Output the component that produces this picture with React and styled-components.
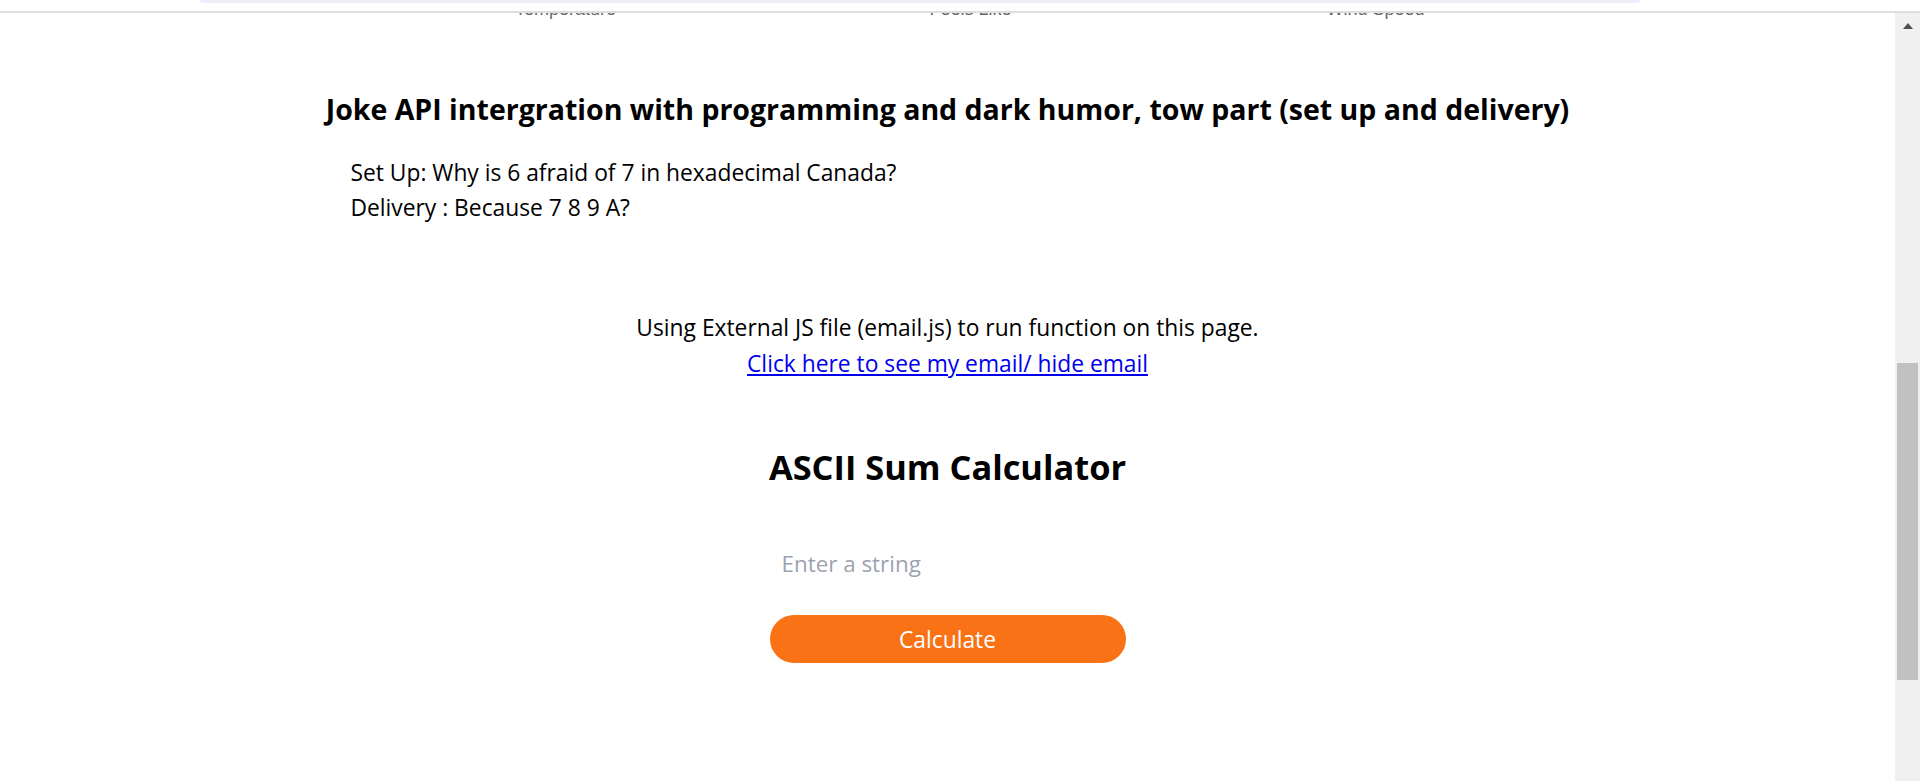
import React from "react";
import styled, { createGlobalStyle } from "styled-components";

const GlobalStyle = createGlobalStyle`
  html, body {
    margin: 0;
    padding: 0;
    overflow: hidden;
    background: #ffffff;
  }
  body {
    font-family: "Open Sans", "Noto Sans", Lato, sans-serif;
    color: #000000;
  }
  * { box-sizing: border-box; }
`;

const Page = styled.div`
  display: flex;
  flex-direction: column;
  width: 100vw;
  height: 100vh;
  overflow: hidden;
  background: #ffffff;
`;

const TopBand = styled.div`
  height: 11px;
  flex: none;
  display: flex;
  align-items: flex-start;
`;

const CardEdge = styled.div`
  margin-left: 200px;
  width: 1440px;
  height: 3px;
  background: #eceffa;
  border-radius: 0 0 14px 14px;
`;

const Divider = styled.div`
  height: 2px;
  flex: none;
  background: #dedede;
`;

const Body = styled.div`
  flex: 1;
  display: flex;
  min-height: 0;
`;

const Main = styled.main`
  flex: 1;
  overflow: hidden;
  display: flex;
  flex-direction: column;
`;

const StatLabels = styled.div`
  margin: -14px 0 0 363px;
  width: 1215px;
  display: grid;
  grid-template-columns: repeat(3, 1fr);
`;

const StatLabel = styled.span`
  text-align: center;
  font-family: "Liberation Sans", Arial, sans-serif;
  font-size: 18px;
  line-height: 20px;
  color: #666666;
`;

const Section = styled.section`
  width: 1250px;
  margin: 0 auto;
`;

const JokeHeading = styled.h3`
  margin: 73px 0 0;
  text-align: center;
  font-size: 28.5px;
  line-height: 34px;
  font-weight: 700;
  white-space: nowrap;
`;

const JokeBody = styled.div`
  margin-top: 29px;
  padding-left: 28px;
`;

const JokeLine = styled.p`
  margin: 0;
  font-size: 22.8px;
  line-height: 35px;
`;

const EmailBlock = styled.div`
  margin-top: 85px;
  text-align: center;
  font-size: 22.8px;
  line-height: 36px;
`;

const EmailLink = styled.a`
  color: #0000ee;
  text-decoration: underline;
  cursor: pointer;
`;

const Calculator = styled.div`
  display: flex;
  flex-direction: column;
  align-items: center;
`;

const CalcTitle = styled.h2`
  margin: 64px 0 0;
  font-size: 34.4px;
  line-height: 42px;
  font-weight: 700;
`;

const CalcInput = styled.input`
  margin-top: 51px;
  width: 356px;
  height: 48px;
  padding: 0 12px;
  border: none;
  outline: none;
  background: transparent;
  font-family: inherit;
  font-size: 22.4px;
  color: #111827;
  &::placeholder {
    color: #9ca3af;
  }
`;

const CalcButton = styled.button`
  margin-top: 28px;
  width: 356px;
  height: 48px;
  border: none;
  border-radius: 24px;
  background: #f97316;
  color: #ffffff;
  font-family: inherit;
  font-size: 22.8px;
  cursor: pointer;
`;

const ScrollTrack = styled.div`
  flex: none;
  width: 25px;
  background: #f0f0f0;
  display: flex;
  flex-direction: column;
  align-items: center;
`;

const ScrollArrow = styled.div`
  margin-top: 10px;
  width: 0;
  height: 0;
  border-left: 5.5px solid transparent;
  border-right: 5.5px solid transparent;
  border-bottom: 6px solid #505050;
`;

const ScrollThumb = styled.div`
  margin-top: 334px;
  width: 21px;
  height: 317px;
  background: #c1c1c1;
`;

export default function App() {
  return (
    <>
      <GlobalStyle />
      <Page>
        <TopBand>
          <CardEdge />
        </TopBand>
        <Divider />
        <Body>
          <Main>
            <StatLabels>
              <StatLabel>Temperature</StatLabel>
              <StatLabel>Feels Like</StatLabel>
              <StatLabel>Wind Speed</StatLabel>
            </StatLabels>
            <Section>
              <JokeHeading>
                Joke API intergration with programming and dark humor, tow part (set up and delivery)
              </JokeHeading>
              <JokeBody>
                <JokeLine>Set Up: Why is 6 afraid of 7 in hexadecimal Canada?</JokeLine>
                <JokeLine>Delivery : Because 7 8 9 A?</JokeLine>
              </JokeBody>
            </Section>
            <EmailBlock>
              Using External JS file (email.js) to run function on this page.
              <br />
              <EmailLink>Click here to see my email/ hide email</EmailLink>
            </EmailBlock>
            <Calculator>
              <CalcTitle>ASCII Sum Calculator</CalcTitle>
              <CalcInput type="text" placeholder="Enter a string" />
              <CalcButton>Calculate</CalcButton>
            </Calculator>
          </Main>
          <ScrollTrack>
            <ScrollArrow />
            <ScrollThumb />
          </ScrollTrack>
        </Body>
      </Page>
    </>
  );
}
